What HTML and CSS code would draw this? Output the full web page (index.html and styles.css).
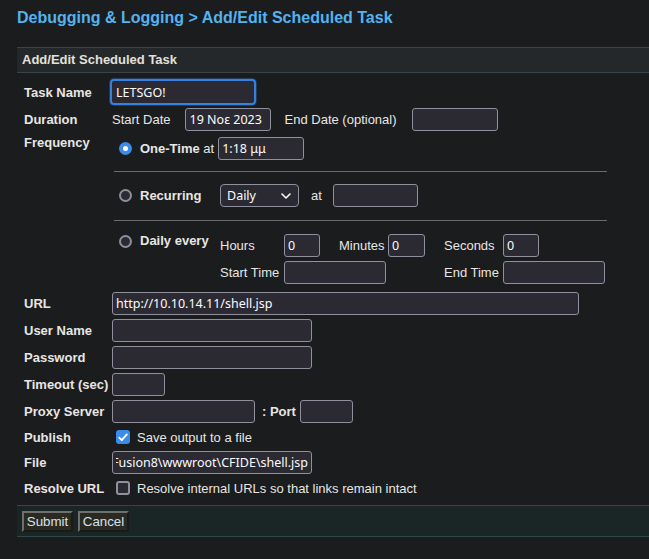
FILE: index.html
```html
<!DOCTYPE html>
<html>
<head>
<meta charset="utf-8">
<link rel="stylesheet" href="styles.css">
</head>
<body>
<div class="page">
  <h1 class="title">Debugging &amp; Logging &gt; Add/Edit Scheduled Task</h1>
  <div class="panel-head">Add/Edit Scheduled Task</div>
  <div class="form">
    <div class="lbl">Task Name</div>
    <div class="val"><input class="txt task" type="text" value="LETSGO!"></div>

    <div class="lbl">Duration</div>
    <div class="val">
      <span class="plain">Start Date</span>
      <input class="txt w86 start" type="text" value="19 Νοε 2023">
      <span class="plain end-lbl">End Date (optional)</span>
      <input class="txt w86 end" type="text" value="">
    </div>

    <div class="lbl top">Frequency</div>
    <div class="freq">
      <div class="opt opt1">
        <span class="radio checked"></span>
        <span class="opttext"><b>One-Time</b> at</span>
        <input class="txt w86 at1" type="text" value="1:18 μμ">
      </div>
      <div class="rule"></div>
      <div class="opt opt2">
        <span class="radio"></span>
        <span class="optlabel"><b>Recurring</b></span>
        <div class="select">
          <select class="sel"><option>Daily</option></select>
          <svg class="chev" width="10" height="6" viewBox="0 0 10 6"><path d="M1 1 L5 5 L9 1" fill="none" stroke="#fbfbfe" stroke-width="1.6" stroke-linecap="round" stroke-linejoin="round"/></svg>
        </div>
        <span class="plain at2">at</span>
        <input class="txt w85 at2in" type="text" value="">
      </div>
      <div class="rule rule2"></div>
      <div class="opt opt3">
        <span class="radio r3"></span>
        <span class="optlabel l3"><b>Daily every</b></span>
        <div class="every">
          <span class="plain">Hours</span>
          <input class="txt w36" type="text" value="0">
          <span class="plain">Minutes</span>
          <input class="txt w37" type="text" value="0">
          <span class="plain">Seconds</span>
          <input class="txt w36" type="text" value="0">
          <span class="plain">Start Time</span>
          <input class="txt w102 span3" type="text" value="">
          <span class="plain">End Time</span>
          <input class="txt w102" type="text" value="">
        </div>
      </div>
    </div>

    <div class="lbl">URL</div>
    <div class="val"><input class="txt w467" type="text" value="http://10.10.14.11/shell.jsp"></div>

    <div class="lbl">User Name</div>
    <div class="val"><input class="txt w200" type="text" value=""></div>

    <div class="lbl">Password</div>
    <div class="val"><input class="txt w200" type="password" value=""></div>

    <div class="lbl">Timeout (sec)</div>
    <div class="val"><input class="txt w53" type="text" value=""></div>

    <div class="lbl">Proxy Server</div>
    <div class="val">
      <input class="txt w143" type="text" value="">
      <b class="port">: Port</b>
      <input class="txt w53" type="text" value="">
    </div>

    <div class="lbl">Publish</div>
    <div class="val"><span class="check checked"><svg width="10" height="9" viewBox="0 0 10 9"><path d="M1.2 4.6 L3.8 7.2 L8.8 1.4" fill="none" stroke="#fff" stroke-width="1.8" stroke-linecap="round" stroke-linejoin="round"/></svg></span><span class="plain">Save output to a file</span></div>

    <div class="lbl">File</div>
    <div class="val"><input class="txt w200 file" dir="rtl" type="text" value="C:\ColdFusion8\wwwroot\CFIDE\shell.jsp"></div>

    <div class="lbl">Resolve URL</div>
    <div class="val"><span class="check"></span><span class="plain">Resolve internal URLs so that links remain intact</span></div>
  </div>
  <div class="footer">
    <button class="btn" type="button">Submit</button>
    <button class="btn" type="button">Cancel</button>
  </div>
</div>
</body>
</html>
```

FILE: styles.css
```css
html, body {
  margin: 0;
  padding: 0;
  background: #1b1c1e;
  overflow: hidden;
}
body {
  font-family: "Liberation Sans", Arial, sans-serif;
  font-size: 13px;
  color: #e8e6e3;
}
.page {
  padding-left: 17px;
}
.title {
  margin: 0;
  padding-top: 9px;
  font-size: 16px;
  line-height: 18px;
  font-weight: bold;
  color: #52b3f0;
}
.panel-head {
  margin-top: 20px;
  height: 24px;
  line-height: 24px;
  padding-left: 5px;
  background: #25282b;
  border-top: 1px solid #38454a;
  border-bottom: 1px solid #38454a;
  font-weight: bold;
  color: #e3e0db;
}
.form {
  display: grid;
  grid-template-columns: 95px 1fr;
  grid-template-rows: 28px 27px 157px 27px 27px 27px 27px 27px 24px 27px 24px;
  margin-top: 5px;
}
.lbl {
  display: flex;
  align-items: center;
  padding-left: 7px;
  font-weight: bold;
  color: #e8e6e3;
  white-space: nowrap;
}
.lbl.top {
  align-items: flex-start;
  padding-top: 2px;
  line-height: 15px;
}
.val {
  display: flex;
  align-items: center;
  white-space: nowrap;
}
.plain {
  color: #e8e6e3;
}
.txt {
  box-sizing: border-box;
  height: 23px;
  margin: 0;
  padding: 0 3px;
  background: #2b2a33;
  border: 1px solid #8f8f9d;
  border-radius: 3px;
  color: #fbfbfe;
  font-family: "Noto Sans", sans-serif;
  font-size: 12.5px;
  outline: none;
}
.task {
  width: 146px;
  height: 26px;
  margin-left: -2px;
  padding-left: 4px;
  border: 2px solid #3580e0;
  border-radius: 4px;
  box-shadow: 0 0 0 1px #263b55;
}
.w86 { width: 86px; }
.w85 { width: 85px; }
.w36 { width: 36px; }
.w37 { width: 37px; }
.w102 { width: 102px; }
.w467 { width: 467px; }
.w200 { width: 200px; }
.w53 { width: 53px; }
.w143 { width: 143px; }
.start { margin-left: 14px; padding-left: 4px; }
.end-lbl { margin-left: 14px; }
.end { margin-left: 15px; }

.freq {
  display: flex;
  flex-direction: column;
}
.opt {
  display: flex;
  align-items: center;
  white-space: nowrap;
}
.opt1, .opt2 {
  height: 31px;
}
.radio {
  box-sizing: border-box;
  flex: none;
  width: 13px;
  height: 13px;
  margin: 0 8px 0 7px;
  border-radius: 50%;
  border: 2px solid #8f8f9d;
  background: #2b2a33;
}
.radio.checked {
  border: 4px solid #3a8ce8;
  background: #ffffff;
}
.opttext b, .optlabel b {
  font-weight: bold;
}
.at1 { margin-left: 4px; }
.rule {
  width: 493px;
  margin: 7px 0 8px 2px;
  border-top: 1px solid #6c6c70;
}
.rule2 {
  margin: 9px 0 0 2px;
}
.optlabel {
  width: 80px;
}
.select {
  position: relative;
  width: 79px;
  height: 23px;
}
.sel {
  appearance: none;
  -webkit-appearance: none;
  box-sizing: border-box;
  width: 79px;
  height: 23px;
  margin: 0;
  padding: 0 0 0 6px;
  background: #2b2a33;
  border: 1px solid #8f8f9d;
  border-radius: 4px;
  color: #fbfbfe;
  font-family: "Noto Sans", sans-serif;
  font-size: 12.5px;
  outline: none;
}
.chev {
  position: absolute;
  right: 8px;
  top: 9px;
  pointer-events: none;
}
.at2 { margin-left: 12px; }
.at2in { margin-left: 11px; }

.opt3 {
  align-items: flex-start;
}
.r3 { margin-top: 14px; }
.l3 { margin-top: 12px; line-height: 15px; }
.every {
  display: grid;
  grid-template-columns: 64px 55px 49px 56px 59px auto;
  grid-template-rows: 23px 23px;
  row-gap: 4px;
  margin-top: 13px;
  align-items: center;
}
.every .span3 {
  grid-column: 2 / span 3;
}

.port {
  margin: 0 4px 0 7px;
}
.check {
  box-sizing: border-box;
  display: inline-flex;
  align-items: center;
  justify-content: center;
  flex: none;
  width: 14px;
  height: 14px;
  margin: 0 7px 0 4px;
  border: 2px solid #8f8f9d;
  border-radius: 3px;
  background: #2b2a33;
}
.check.checked {
  border: none;
  background: #3a8ce8;
}
.file {
  direction: rtl;
}

.footer {
  margin-top: 5px;
  padding: 5px 5px 4px;
  background: #1a2525;
  border-top: 1px solid #2f4848;
  border-bottom: 1px solid #2f4848;
  display: flex;
  gap: 5px;
}
.btn {
  box-sizing: border-box;
  height: 21px;
  width: 51px;
  margin: 0;
  padding: 0;
  background: #2b2a20;
  border: 2px outset #6f6f6f;
  color: #d2e2f4;
  font-family: "Liberation Sans", Arial, sans-serif;
  font-size: 13.33px;
}
```
